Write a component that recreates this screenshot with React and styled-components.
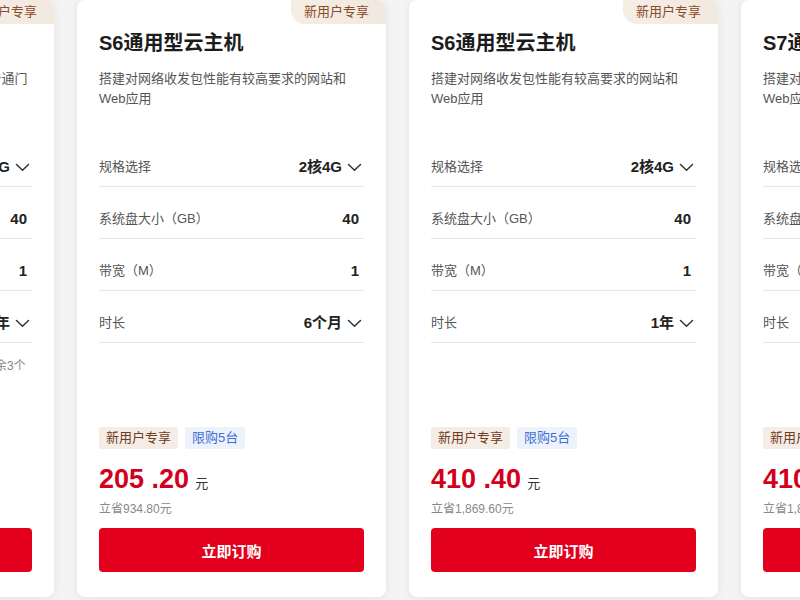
import React from "react";
import styled, { createGlobalStyle } from "styled-components";

const Global = createGlobalStyle`
  html, body {
    margin: 0;
    padding: 0;
    width: 800px;
    height: 600px;
    overflow: hidden;
    background: #f4f4f5;
    font-family: "Liberation Sans", "Noto Sans CJK SC", sans-serif;
  }
  * { box-sizing: border-box; }
`;

const Viewport = styled.div`
  width: 800px;
  height: 600px;
  overflow: hidden;
`;

const Track = styled.div`
  display: flex;
  gap: 23px;
  margin-left: -255px;
`;

const Card = styled.div`
  position: relative;
  flex: 0 0 309px;
  height: 597px;
  display: flex;
  flex-direction: column;
  padding: 30px 22px 25px;
  background: #fff;
  border-radius: 8px;
  box-shadow: 0 1px 8px rgba(0, 0, 0, 0.08);
  overflow: hidden;
`;

const CornerTag = styled.div`
  position: absolute;
  top: 0;
  right: 0;
  height: 24px;
  line-height: 24px;
  padding: 0 17px 0 13px;
  font-size: 13px;
  color: #8a4b2a;
  background: linear-gradient(90deg, #f6ede4, #f1e8df);
  border-radius: 0 8px 0 14px;
`;

const Title = styled.h3`
  margin: 0;
  font-size: 20px;
  line-height: 26px;
  font-weight: 700;
  color: #1c1c1c;
`;

const Desc = styled.p`
  margin: 13px 0 0;
  font-size: 13px;
  line-height: 20px;
  height: 40px;
  color: #555;
`;

const SpecList = styled.div`
  margin-top: 26px;
`;

const Row = styled.div`
  display: flex;
  justify-content: space-between;
  align-items: center;
  padding: 22px 0 9px;
  line-height: 20px;
  border-bottom: 1px solid #e6e6e6;
`;

const Label = styled.span`
  font-size: 13px;
  color: #555;
`;

const Value = styled.span`
  display: flex;
  align-items: center;
  gap: 5px;
  padding-right: ${(p) => (p.$select ? "2px" : "5px")};
  font-size: 15px;
  font-weight: 700;
  color: #222;
`;

const Note = styled.div`
  margin-top: 14px;
  font-size: 12px;
  line-height: 18px;
  color: #888;
  white-space: nowrap;
`;

const Bottom = styled.div`
  margin-top: auto;
`;

const Tags = styled.div`
  display: flex;
  gap: 7px;
`;

const Tag = styled.span`
  height: 22px;
  line-height: 22px;
  padding: 0 7px;
  font-size: 13px;
  border-radius: 2px;
  color: ${(p) => (p.$blue ? "#3d6fd6" : "#6e3c1f")};
  background: ${(p) => (p.$blue ? "#eef3fb" : "#f5ede5")};
`;

const Price = styled.div`
  margin-top: 14px;
  line-height: 32px;
  display: flex;
  align-items: baseline;
`;

const Amount = styled.span`
  font-size: 27px;
  font-weight: 700;
  color: #d3001c;
`;

const Unit = styled.span`
  margin-left: 6px;
  font-size: 13px;
  color: #333;
`;

const Save = styled.div`
  font-size: 12px;
  line-height: 18px;
  color: #888;
`;

const BuyButton = styled.button`
  margin-top: 10px;
  width: 100%;
  height: 44px;
  border: none;
  border-radius: 4px;
  background: #e2001d;
  color: #fff;
  font-family: inherit;
  font-size: 15px;
  font-weight: 700;
  cursor: pointer;
`;

const Chevron = () => (
  <svg width="15" height="9" viewBox="0 0 15 9" fill="none">
    <path d="M1.5 1.5 L7.5 7.2 L13.5 1.5" stroke="#333" strokeWidth="1.5" strokeLinecap="round" strokeLinejoin="round" />
  </svg>
);

const cards = [
  {
    title: "S5通用型云主机",
    desc: "适用于企业官网、Web开发测试环境及普通门户网站",
    spec: "1核2G",
    disk: "40",
    bw: "1",
    dur: "1年",
    note: "注：该规格每个用户限购一次，当前库存剩余3个",
    price: "99",
    dec: ".00",
    save: "立省501.00元",
  },
  {
    title: "S6通用型云主机",
    desc: "搭建对网络收发包性能有较高要求的网站和Web应用",
    spec: "2核4G",
    disk: "40",
    bw: "1",
    dur: "6个月",
    price: "205",
    dec: ".20",
    save: "立省934.80元",
  },
  {
    title: "S6通用型云主机",
    desc: "搭建对网络收发包性能有较高要求的网站和Web应用",
    spec: "2核4G",
    disk: "40",
    bw: "1",
    dur: "1年",
    price: "410",
    dec: ".40",
    save: "立省1,869.60元",
  },
  {
    title: "S7通用型云主机",
    desc: "搭建对网络收发包性能有较高要求的网站和Web应用",
    spec: "2核4G",
    disk: "40",
    bw: "1",
    dur: "1年",
    price: "410",
    dec: ".40",
    save: "立省1,869.60元",
  },
];

export default function App() {
  return (
    <Viewport>
      <Global />
      <Track>
        {cards.map((c, i) => (
          <Card key={i}>
            <CornerTag>新用户专享</CornerTag>
            <Title>{c.title}</Title>
            <Desc>{c.desc}</Desc>
            <SpecList>
              <Row>
                <Label>规格选择</Label>
                <Value $select>
                  {c.spec}
                  <Chevron />
                </Value>
              </Row>
              <Row>
                <Label>系统盘大小（GB）</Label>
                <Value>{c.disk}</Value>
              </Row>
              <Row>
                <Label>带宽（M）</Label>
                <Value>{c.bw}</Value>
              </Row>
              <Row>
                <Label>时长</Label>
                <Value $select>
                  {c.dur}
                  <Chevron />
                </Value>
              </Row>
            </SpecList>
            {c.note && <Note>{c.note}</Note>}
            <Bottom>
              <Tags>
                <Tag>新用户专享</Tag>
                <Tag $blue>限购5台</Tag>
              </Tags>
              <Price>
                <Amount>
                  {c.price} {c.dec}
                </Amount>
                <Unit>元</Unit>
              </Price>
              <Save>{c.save}</Save>
              <BuyButton>立即订购</BuyButton>
            </Bottom>
          </Card>
        ))}
      </Track>
    </Viewport>
  );
}
